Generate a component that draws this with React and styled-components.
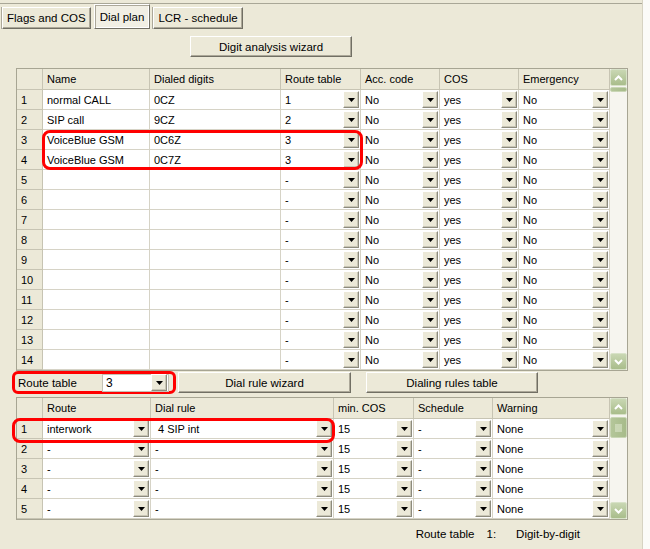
import React from "react";
import styled, { createGlobalStyle } from "styled-components";

const GlobalStyle = createGlobalStyle`
  html, body {
    margin: 0;
    padding: 0;
    background: #ffffff;
  }
  body {
    font-family: "Liberation Sans", Arial, sans-serif;
    font-size: 11px;
    color: #000;
  }
`;

// data

const TOP_COLS = [26, 107, 131, 80, 79, 79, 91];
const BOTTOM_COLS = [26, 108, 183, 80, 79, 117];

const topHeaders = ["", "Name", "Dialed digits", "Route table", "Acc. code", "COS", "Emergency"];
const bottomHeaders = ["", "Route", "Dial rule", "min. COS", "Schedule", "Warning"];

const topRows = [
  ["normal CALL", "0CZ", "1"],
  ["SIP call", "9CZ", "2"],
  ["VoiceBlue GSM", "0C6Z", "3"],
  ["VoiceBlue GSM", "0C7Z", "3"],
  ...Array.from({ length: 10 }, () => ["", "", "-"]),
];

const bottomRows = [
  ["interwork", "4 SIP int", "15", "-", "None"],
  ...Array.from({ length: 4 }, () => ["-", "-", "15", "-", "None"]),
];

// small drawings

const Triangle = () => (
  <svg width="7" height="4" viewBox="0 0 7 4">
    <path d="M0 0h7L3.5 4z" fill="#000" />
  </svg>
);

const Chevron = ({ down }) => (
  <svg width="9" height="6" viewBox="0 0 9 6">
    <polyline
      points={down ? "1,1 4.5,4.5 8,1" : "1,5 4.5,1.5 8,5"}
      fill="none"
      stroke="#fff"
      strokeWidth="2"
    />
  </svg>
);

function App() {
  return (
    <>
      <GlobalStyle />
      <Window>
        <Panel>
          <TabStrip>
            <Tab>Flags and COS</Tab>
            <Tab $active>Dial plan</Tab>
            <Tab>LCR - schedule</Tab>
          </TabStrip>

          <WizardRow>
            <Button $w={162}>Digit analysis wizard</Button>
          </WizardRow>

          <TableFrame $mt={11}>
            <Grid $cols={TOP_COLS}>
              {topHeaders.map((h, i) => (
                <HeadCell key={i}>{h}</HeadCell>
              ))}
              {topRows.map((r, i) => (
                <React.Fragment key={i}>
                  <NumCell>{i + 1}</NumCell>
                  <Cell>{r[0]}</Cell>
                  <Cell>{r[1]}</Cell>
                  <ComboCell text={r[2]} />
                  <ComboCell text="No" />
                  <ComboCell text="yes" />
                  <ComboCell text="No" />
                </React.Fragment>
              ))}
            </Grid>
            <Scrollbar thumbTop={1} thumbHeight={5} />
            <Highlight $left={25} $top={61} $w={321} $h={40} />
          </TableFrame>

          <RouteBar>
            <RouteGroup>
              <RouteLabel>Route table</RouteLabel>
              <Combo>
                <span>3</span>
                <DropBtn>
                  <Triangle />
                </DropBtn>
              </Combo>
            </RouteGroup>
            <Button $w={173}>Dial rule wizard</Button>
            <Button $w={172} $ml={15}>Dialing rules table</Button>
          </RouteBar>

          <TableFrame $mt={3}>
            <Grid $cols={BOTTOM_COLS}>
              {bottomHeaders.map((h, i) => (
                <HeadCell key={i}>{h}</HeadCell>
              ))}
              {bottomRows.map((r, i) => (
                <React.Fragment key={i}>
                  <NumCell>{i + 1}</NumCell>
                  {r.map((t, j) => (
                    <ComboCell key={j} text={t} indent={i === 0 && j === 1} />
                  ))}
                </React.Fragment>
              ))}
            </Grid>
            <Scrollbar thumbTop={2} thumbHeight={21} grip />
            <Highlight $left={-5} $top={20} $w={323} $h={25} />
          </TableFrame>

          <StatusLine>
            <span>Route table</span>
            <StatusNum>1:</StatusNum>
            <span>Digit-by-digit</span>
          </StatusLine>
        </Panel>
      </Window>
    </>
  );
}

function ComboCell({ text, indent }) {
  return (
    <Cell $indent={indent}>
      <span>{text}</span>
      <DropBtn>
        <Triangle />
      </DropBtn>
    </Cell>
  );
}

function Scrollbar({ thumbTop, thumbHeight, grip }) {
  return (
    <ScrollTrack>
      <ScrollBtn>
        <Chevron />
      </ScrollBtn>
      <Thumb style={{ marginTop: thumbTop, height: thumbHeight }}>
        {grip && (
          <svg width="7" height="8" viewBox="0 0 7 8">
            <path d="M0 1h7M0 3h7M0 5h7M0 7h7" stroke="#e4ecd6" strokeWidth="1" />
          </svg>
        )}
      </Thumb>
      <ScrollSpacer />
      <ScrollBtn>
        <Chevron down />
      </ScrollBtn>
    </ScrollTrack>
  );
}

export default App;

// styles

const Window = styled.div`
  width: 650px;
  height: 549px;
  display: flex;
  background: #fbfbf8;
  overflow: hidden;
`;

const Panel = styled.div`
  width: 643px;
  height: 549px;
  box-sizing: border-box;
  background: #ece9d8;
  border-right: 1px solid #d6d3c2;
  display: flex;
  flex-direction: column;
`;

const TabStrip = styled.div`
  margin-top: 3px;
  height: 25px;
  border-top: 1px solid #a9a797;
  display: flex;
  align-items: flex-end;
  gap: 3px;
  padding-left: 2px;
`;

const Tab = styled.div`
  box-sizing: border-box;
  height: ${(p) => (p.$active ? 25 : 22)}px;
  margin-top: ${(p) => (p.$active ? -1 : 0)}px;
  padding: 0 ${(p) => (p.$active ? 5 : 4)}px;
  display: flex;
  align-items: center;
  background: ${(p) => (p.$active ? "#f1efe4" : "#ece9d8")};
  border: 1px solid;
  border-color: #ffffff #716f64 #716f64 #ffffff;
  box-shadow: ${(p) =>
    p.$active
      ? "inset 1px 1px #aca899, inset -1px -1px #ffffff"
      : "inset -1px -1px #aca899, -1px 0 #aca899"};
  font-size: 11.5px;
`;

const WizardRow = styled.div`
  display: flex;
  padding-left: 190px;
  margin-top: 7px;
`;

const Button = styled.div`
  box-sizing: border-box;
  width: ${(p) => p.$w}px;
  height: 21px;
  margin-left: ${(p) => p.$ml || 0}px;
  display: flex;
  align-items: center;
  justify-content: center;
  background: #ece9d8;
  border: 1px solid;
  border-color: #ffffff #716f64 #716f64 #ffffff;
  box-shadow: inset -1px -1px #aca899;
  font-size: 11.5px;
`;

const TableFrame = styled.div`
  position: relative;
  margin-top: ${(p) => p.$mt}px;
  margin-left: 16px;
  align-self: flex-start;
  display: flex;
  border: 1px solid #a7a593;
  background: #ece9d8;
`;

const Grid = styled.div`
  display: grid;
  grid-template-columns: ${(p) => p.$cols.map((c) => `${c}px`).join(" ")};
`;

const HeadCell = styled.div`
  box-sizing: border-box;
  height: 21px;
  display: flex;
  align-items: center;
  padding-left: 4px;
  background: #ece9d8;
  border-right: 1px solid #c7c4b3;
  border-bottom: 1px solid #c7c4b3;
  white-space: nowrap;
  overflow: hidden;
`;

const NumCell = styled.div`
  box-sizing: border-box;
  height: 20px;
  display: flex;
  align-items: center;
  padding-left: 4px;
  background: #ece9d8;
  border-right: 1px solid #c7c4b3;
  border-bottom: 1px solid #c7c4b3;
`;

const Cell = styled.div`
  box-sizing: border-box;
  height: 20px;
  display: flex;
  align-items: center;
  justify-content: space-between;
  padding-left: ${(p) => (p.$indent ? 7 : 4)}px;
  background: #ffffff;
  border-right: 1px solid #d6d3c6;
  border-bottom: 1px solid #d6d3c6;
  white-space: nowrap;
  overflow: hidden;
`;

const DropBtn = styled.div`
  box-sizing: border-box;
  flex: none;
  width: 16px;
  height: 17px;
  margin-right: 1px;
  display: flex;
  align-items: center;
  justify-content: center;
  background: #ece9d8;
  border: 1px solid;
  border-color: #ffffff #8d8b7d #8d8b7d #ffffff;
  box-shadow: inset -1px -1px #c9c6b6;
`;

const ScrollTrack = styled.div`
  width: 17px;
  display: flex;
  flex-direction: column;
  background: #f6f5ef;
`;

const ScrollBtn = styled.div`
  box-sizing: border-box;
  width: 17px;
  height: 17px;
  display: flex;
  align-items: center;
  justify-content: center;
  background: linear-gradient(#c9d7b3, #a9bd8b);
  border: 1px solid #d8e2c8;
  border-radius: 2px;
`;

const Thumb = styled.div`
  box-sizing: border-box;
  width: 17px;
  display: flex;
  align-items: center;
  justify-content: center;
  background: linear-gradient(90deg, #b4c69a, #a7bb8a);
  border: 1px solid #c9d6b5;
  border-radius: 2px;
`;

const ScrollSpacer = styled.div`
  flex: 1;
`;

const Highlight = styled.div`
  position: absolute;
  left: ${(p) => p.$left}px;
  top: ${(p) => p.$top}px;
  width: ${(p) => p.$w}px;
  height: ${(p) => p.$h}px;
  box-sizing: border-box;
  border: 3px solid #ff0000;
  border-radius: 8px;
  pointer-events: none;
`;

const RouteBar = styled.div`
  display: flex;
  align-items: center;
  margin-top: 0px;
  padding-left: 12px;
  height: 23px;
`;

const RouteGroup = styled.div`
  box-sizing: border-box;
  width: 164px;
  height: 23px;
  margin-right: 2px;
  display: flex;
  align-items: center;
  border: 3px solid #ff0000;
  border-radius: 6px;
  padding-left: 3px;
`;

const RouteLabel = styled.span`
  width: 84px;
  font-size: 11.5px;
`;

const Combo = styled.div`
  box-sizing: border-box;
  width: 67px;
  height: 18px;
  display: flex;
  align-items: center;
  justify-content: space-between;
  padding-left: 3px;
  background: #ffffff;
  border: 1px solid #c4c2b6;
  font-size: 12px;
`;

const StatusLine = styled.div`
  display: flex;
  justify-content: flex-end;
  padding-right: 62px;
  margin-top: 7px;
  height: 14px;
  align-items: center;
  font-size: 11.5px;
`;

const StatusNum = styled.span`
  margin: 0 20px 0 12px;
`;
